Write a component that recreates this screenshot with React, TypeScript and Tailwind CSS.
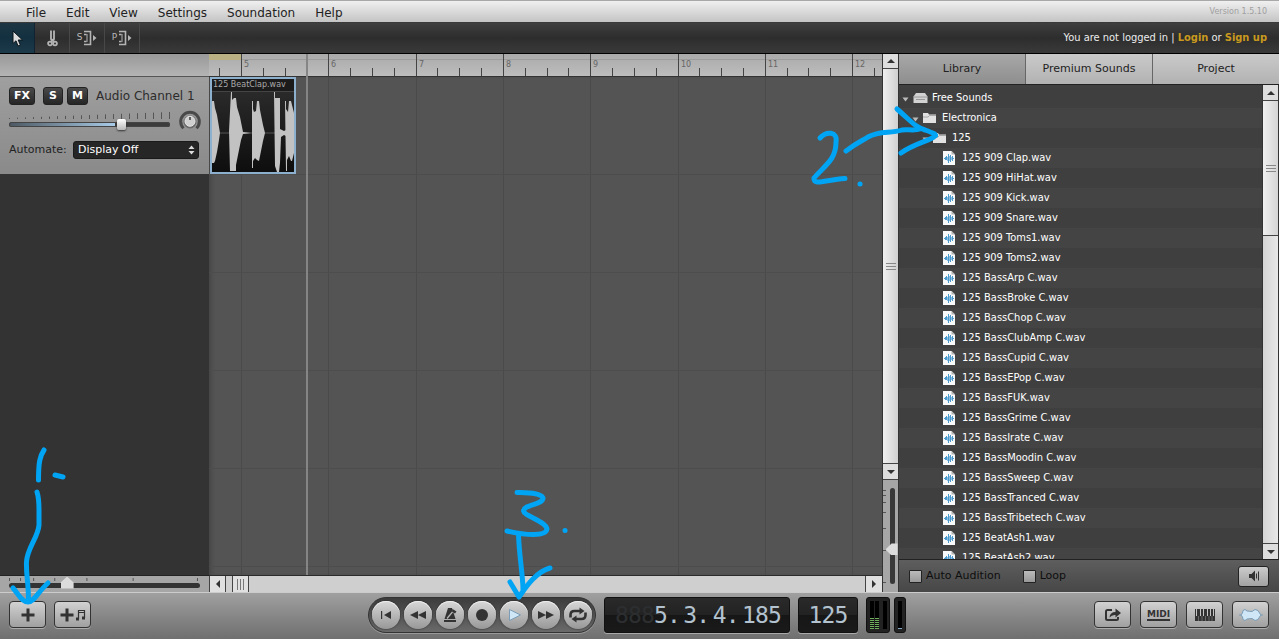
import React from "react";

const MENUS = ["File", "Edit", "View", "Settings", "Soundation", "Help"];

const FILES = [
  "125 909 Clap.wav",
  "125 909 HiHat.wav",
  "125 909 Kick.wav",
  "125 909 Snare.wav",
  "125 909 Toms1.wav",
  "125 909 Toms2.wav",
  "125 BassArp C.wav",
  "125 BassBroke C.wav",
  "125 BassChop C.wav",
  "125 BassClubAmp C.wav",
  "125 BassCupid C.wav",
  "125 BassEPop C.wav",
  "125 BassFUK.wav",
  "125 BassGrime C.wav",
  "125 BassIrate C.wav",
  "125 BassMoodin C.wav",
  "125 BassSweep C.wav",
  "125 BassTranced C.wav",
  "125 BassTribetech C.wav",
  "125 BeatAsh1.wav",
  "125 BeatAsh2.wav",
];

const BAR = 87.3;
const FIRST_BAR_X = 32;

function Triangle({ dir, className = "" }: { dir: "up" | "down" | "left" | "right"; className?: string }) {
  const d = {
    up: "M0 6 L4 2 L8 6Z",
    down: "M0 2 L8 2 L4 6Z",
    left: "M6 0 L2 4 L6 8Z",
    right: "M2 0 L6 4 L2 8Z",
  }[dir];
  return (
    <svg width="8" height="8" viewBox="0 0 8 8" className={className} aria-hidden="true">
      <path d={d} fill="currentColor" />
    </svg>
  );
}

function MenuBar() {
  return (
    <header className="flex h-[23px] shrink-0 items-center justify-between border-t border-b border-t-[#a8a8a8] border-b-[#3a3a3a] bg-gradient-to-b from-[#f0f0f0] to-[#c4c4c4] pl-4 pr-3">
      <nav className="flex pt-[2px]">
        {MENUS.map((m) => (
          <button key={m} className="px-2.5 text-[12px] leading-4 text-[#222]">
            {m}
          </button>
        ))}
      </nav>
      <span className="text-[8px] leading-4 text-[#a0a0a0]">Version 1.5.10</span>
    </header>
  );
}

function ToolButton({ label, active, children }: { label: string; active?: boolean; children: React.ReactNode }) {
  return (
    <button
      aria-label={label}
      className={
        "flex h-full w-[35px] items-center justify-center border-r text-[#b8b8b8] " +
        (active ? "border-[#123] bg-gradient-to-b from-[#1d3644] via-[#123040] to-[#1c3a4a]" : "border-[#484848]")
      }
    >
      {children}
    </button>
  );
}

function BracketIcon() {
  return (
    <svg width="13" height="16" viewBox="0 0 13 16" aria-hidden="true">
      <path d="M0 1.500h6.500v13H0M0 4.500h2.500M0 11.500h2.500" fill="none" stroke="#b4b4b4" strokeWidth="1.600" />
      <path d="M3 4v8" stroke="#b4b4b4" />
      <path d="M9 5v6l3.500-3z" fill="#b4b4b4" />
    </svg>
  );
}

function Toolbar() {
  return (
    <div className="flex h-[31px] shrink-0 items-center justify-between border-b border-black bg-gradient-to-b from-[#3e3e3e] via-[#2d2d2d] to-[#3a3a3a] pr-3">
      <div className="flex h-full">
        <ToolButton label="Select" active>
          <svg width="12" height="17" viewBox="0 0 12 17" aria-hidden="true">
            <path d="M2 1v12.500l3-2.700L7 16l2.400-1-2.200-5H11.500z" fill="#dcdcdc" stroke="#0b151b" />
          </svg>
        </ToolButton>
        <ToolButton label="Cut">
          <svg width="11" height="17" viewBox="0 0 11 17" fill="none" stroke="#b4b4b4" strokeWidth="1.800" aria-hidden="true">
            <path d="M4 0.500v8.500L7.500 12M7 0.500v8.500L3.500 12" />
            <circle cx="3" cy="13.500" r="1.900" />
            <circle cx="8" cy="13.500" r="1.900" />
          </svg>
        </ToolButton>
        <ToolButton label="Snap to grid">
          <span className="mr-0.5 text-[9px]">S</span>
          <BracketIcon />
        </ToolButton>
        <ToolButton label="Playhead snap">
          <span className="mr-0.5 text-[9px]">P</span>
          <BracketIcon />
        </ToolButton>
      </div>
      <p className="font-['DejaVu_Sans_Condensed','DejaVu_Sans',sans-serif] text-[11px] leading-4 text-[#ececec]">
        You are not logged in |{" "}
        <a href="#login" className="font-bold text-[#c99a1e]">
          Login
        </a>{" "}
        or{" "}
        <a href="#signup" className="font-bold text-[#c99a1e]">
          Sign up
        </a>
      </p>
    </div>
  );
}

function ChannelButton({ children }: { children: string }) {
  return (
    <button className="h-[18px] min-w-5 rounded-[3px] border border-[#222] bg-gradient-to-b from-[#4a4a4a] to-[#262626] px-1 text-[11px] font-bold leading-4 text-white">
      {children}
    </button>
  );
}

function Channel() {
  return (
    <section className="flex h-[98px] shrink-0 flex-col border-t border-t-[#555] bg-gradient-to-b from-[#9f9f9f] to-[#8a8a8a] pl-[9px] pr-2.5 pt-2.5">
      <div className="flex items-center">
        <div className="flex items-center">
          <ChannelButton>FX</ChannelButton>
          <div className="ml-2 flex gap-1">
            <ChannelButton>S</ChannelButton>
            <ChannelButton>M</ChannelButton>
          </div>
        </div>
        <span className="ml-2 text-[12px] leading-4 text-[#2c2c2c]">Audio Channel 1</span>
      </div>
      <div className="mt-[5px] flex items-start justify-between">
        <div className="flex w-[161px] flex-col pt-[2px]">
          <svg height="8" className="w-full shrink-0" viewBox="0 0 161 8" preserveAspectRatio="none" aria-hidden="true">
            {Array.from({ length: 21 }, (_, i) => (
              <rect key={i} x={i * 8} y={6 - i * 0.3} width="1" height={1 + i * 0.3} fill="#555" />
            ))}
          </svg>
          <input
            type="range"
            aria-label="Volume"
            defaultValue={71}
            className="mt-[-2px] h-3 w-full cursor-pointer appearance-none bg-transparent [&::-webkit-slider-runnable-track]:h-[5px] [&::-webkit-slider-runnable-track]:rounded-sm [&::-webkit-slider-runnable-track]:bg-[linear-gradient(to_right,#4c5862,#a9cce8_66%,#3c3c3c_66%)] [&::-webkit-slider-runnable-track]:shadow-[inset_0_0_0_1px_#444] [&::-webkit-slider-thumb]:mt-[-3px] [&::-webkit-slider-thumb]:h-[11px] [&::-webkit-slider-thumb]:w-[9px] [&::-webkit-slider-thumb]:appearance-none [&::-webkit-slider-thumb]:rounded-[2px] [&::-webkit-slider-thumb]:bg-gradient-to-b [&::-webkit-slider-thumb]:from-white [&::-webkit-slider-thumb]:to-[#b8b8b8] [&::-webkit-slider-thumb]:shadow-[0_1px_2px_#333]"
          />
        </div>
        <svg width="22" height="22" viewBox="0 0 22 22" className="-mr-0.5" role="img" aria-label="Pan">
          <path d="M4.500 18.200A9.300 9.300 0 1 1 17.500 18.200" fill="none" stroke="#4a4a4a" strokeWidth="3" />
          <circle cx="11" cy="12" r="6.500" fill="#6a6a6a" />
          <circle cx="11" cy="11.300" r="5" fill="#d0d0d0" stroke="#e8e8e8" />
          <path d="M11 7v3" stroke="#333" strokeWidth="1.400" />
        </svg>
      </div>
      <div className="mt-[9px] flex items-center justify-between">
        <label htmlFor="automate" className="text-[11px] leading-4 text-[#222]">
          Automate:
        </label>
        <div className="relative w-[126px]">
          <select
            id="automate"
            className="block h-[18px] w-full appearance-none rounded-[3px] border border-[#1a1a1a] bg-[#262626] pl-1 text-[11px] font-medium leading-4 text-white"
          >
            <option>Display Off</option>
          </select>
          <svg width="7" height="10" viewBox="0 0 7 10" className="pointer-events-none absolute right-1 top-1" aria-hidden="true">
            <path d="M0.500 4L3.500 0.500 6.500 4zM0.500 6L3.500 9.500 6.500 6z" fill="#ddd" />
          </svg>
        </div>
      </div>
    </section>
  );
}

function TrackPanel() {
  return (
    <aside className="flex w-[209px] shrink-0 flex-col bg-[#333]">
      <div className="h-[22px] shrink-0 bg-gradient-to-b from-[#999] to-[#b4b4b4]" />
      <Channel />
      <div className="flex-1" />
      <div className="flex h-[17px] shrink-0 flex-col border-t border-[#222] bg-[#a6a6a6] px-[9px]">
        <svg height="4" className="mt-[2px] w-full shrink-0" viewBox="0 0 190 4" preserveAspectRatio="none" aria-hidden="true">
          {[0, 11, 24, 45, 77, 123, 187].map((x) => (
            <rect key={x} x={x} y="0" width="1" height="3" fill="#555" />
          ))}
        </svg>
        <input
          type="range"
          aria-label="Horizontal zoom"
          defaultValue={29}
          className="mt-[-3px] h-3 w-full appearance-none bg-transparent [&::-webkit-slider-runnable-track]:h-[5px] [&::-webkit-slider-runnable-track]:rounded-sm [&::-webkit-slider-runnable-track]:bg-[#333] [&::-webkit-slider-thumb]:mt-[-6px] [&::-webkit-slider-thumb]:h-[12px] [&::-webkit-slider-thumb]:w-[13px] [&::-webkit-slider-thumb]:appearance-none [&::-webkit-slider-thumb]:bg-[#dcdcdc] [&::-webkit-slider-thumb]:[clip-path:polygon(50%_0,100%_50%,100%_100%,0_100%,0_50%)]"
        />
      </div>
    </aside>
  );
}

function Ruler() {
  return (
    <div className="relative h-[23px] shrink-0 overflow-hidden border-b border-[#333] bg-gradient-to-b from-[#aaa] to-[#bdbdbd]">
      <div className="h-[6px] border-b border-[#9c9c9c]">
        <div className="h-[6px] w-8 bg-[#b9b183]" />
      </div>
      <svg className="absolute inset-0 h-full w-full" aria-hidden="true">
        {Array.from({ length: 34 }, (_, i) => {
          const x = Math.round(FIRST_BAR_X + ((i - 1) * BAR) / 4);
          const major = (i - 1) % 4 === 0;
          return <rect key={i} x={x} y={major ? 0 : 14} width="1" height={major ? 22 : 8} fill="#444" />;
        })}
      </svg>
      {Array.from({ length: 8 }, (_, i) => (
        <span
          key={i}
          className="absolute top-[6px] text-[8px] leading-[9px] text-[#666]"
          style={{ left: Math.round(FIRST_BAR_X + 3 + i * BAR) }}
        >
          {i + 5}
        </span>
      ))}
    </div>
  );
}

function Clip() {
  return (
    <div className="absolute left-px top-0 flex h-[97px] w-[86px] flex-col overflow-hidden border-2 border-[#8eb0cf] bg-[#111]">
      <span className="h-[13px] shrink-0 whitespace-nowrap border-b border-[#444] bg-[#1b1b1b] pl-px text-[8px] leading-[11px] text-[#aaa]">
        125 BeatClap.wav
      </span>
      <svg className="min-h-0 w-full flex-1 bg-gradient-to-b from-[#2a2a2a] to-[#0e0e0e]" viewBox="0 0 82 80" preserveAspectRatio="none" aria-hidden="true">
        <path d="M0 41H82" stroke="#555" />
        <g fill="#c2c2c2">
          <path d="M0 9h2l1 7 2 7 2 12 1 6-1 7-2 12-2 9-1 2H0z" />
          <path d="M19 0h1v8l2-2h2l1 9 3 10 2 10 1 5 8 1-8 1-2 6-3 15-2 10v6h-6l-1-40z" />
          <path d="M40 9h1v8l1 3 2-1 1-10h2l1 9 3 15 2 8-2 8-2 10-2 10-2-1-2-2-2 3v7h-1z" />
          <path d="M62 0h1v6h5v31l4 2 2-1v6l-2-1-3 2-1 26-1 9h-2l-2-6z" />
          <path d="M73 9h1v8l2 3 1-11h2l3 12v40l-2 8h-1l-2-5-2 4v11h-1z" />
        </g>
      </svg>
    </div>
  );
}

function Timeline() {
  return (
    <main className="flex min-w-0 flex-1 flex-col">
      <div className="relative flex min-h-0 flex-1 flex-col">
        <Ruler />
        <div className="relative min-h-0 flex-1 bg-[#545454] shadow-[inset_4px_0_4px_-2px_#444]">
          <svg className="absolute inset-0 h-full w-full" aria-hidden="true">
            {Array.from({ length: 8 }, (_, i) => (
              <rect key={i} x={Math.round(FIRST_BAR_X + i * BAR)} y="0" width="1" height="100%" fill="#4a4a4a" />
            ))}
            {Array.from({ length: 5 }, (_, i) => (
              <rect key={i} x="0" y={97 + i * 98} width="100%" height="1" fill="#4d4d4d" />
            ))}
          </svg>
          <Clip />
        </div>
        <div className="absolute bottom-0 left-[97px] top-0 w-[2px] bg-[#858585]" />
      </div>
      <div className="flex h-[17px] shrink-0 border-t border-[#2b2b2b] bg-[#cfcfcf] text-[#333]">
        <button aria-label="Scroll left" className="flex w-[17px] items-center justify-center border-x border-[#444] bg-[#e0e0e0]">
          <Triangle dir="left" />
        </button>
        <div className="flex min-w-0 flex-1">
          <div className="ml-[6px] flex w-[17px] items-center justify-center gap-[2px] border-x border-[#444] bg-[#e0e0e0]">
            <i className="h-[11px] w-px bg-[#777]" />
            <i className="h-[11px] w-px bg-[#777]" />
            <i className="h-[11px] w-px bg-[#777]" />
          </div>
        </div>
        <button aria-label="Scroll right" className="flex w-[17px] items-center justify-center border-l border-[#444] bg-[#e0e0e0]">
          <Triangle dir="right" />
        </button>
      </div>
    </main>
  );
}

function Grip() {
  return (
    <div className="flex flex-col gap-[2px]">
      <i className="h-px w-[10px] bg-[#888]" />
      <i className="h-px w-[10px] bg-[#888]" />
      <i className="h-px w-[10px] bg-[#888]" />
    </div>
  );
}

function VerticalBar() {
  return (
    <div className="flex w-[17px] shrink-0 flex-col border-x border-[#333] text-[#333]">
      <button aria-label="Scroll up" className="flex h-[15px] items-center justify-center border-b border-[#444] bg-[#dedede]">
        <Triangle dir="up" />
      </button>
      <div className="flex min-h-0 flex-1 items-center justify-center bg-gradient-to-r from-[#f0f0f0] to-[#d0d0d0]">
        <Grip />
      </div>
      <button aria-label="Scroll down" className="flex h-[17px] shrink-0 items-center justify-center border-y border-[#444] bg-[#dedede]">
        <Triangle dir="down" />
      </button>
      <div className="flex h-[112px] shrink-0 justify-end bg-[#a6a6a6] py-2">
        <svg width="3" height="96" aria-hidden="true">
          {[2, 7, 14, 24, 40, 62, 94].map((y) => (
            <rect key={y} x="0" y={y} width="3" height="1" fill="#555" />
          ))}
        </svg>
        <input
          type="range"
          aria-label="Vertical zoom"
          defaultValue={34}
          className="h-full w-[12px] appearance-none bg-transparent [direction:rtl] [writing-mode:vertical-lr] [&::-webkit-slider-runnable-track]:w-[5px] [&::-webkit-slider-runnable-track]:rounded-sm [&::-webkit-slider-runnable-track]:bg-[#383838] [&::-webkit-slider-thumb]:ml-[-4px] [&::-webkit-slider-thumb]:h-[12px] [&::-webkit-slider-thumb]:w-[12px] [&::-webkit-slider-thumb]:appearance-none [&::-webkit-slider-thumb]:bg-[#dcdcdc] [&::-webkit-slider-thumb]:[clip-path:polygon(0_50%,50%_0,100%_0,100%_100%,50%_100%)]"
        />
      </div>
    </div>
  );
}

function FolderIcon() {
  return (
    <svg width="13" height="10" viewBox="0 0 13 10" aria-hidden="true">
      <path d="M0 0h5l1 1.500h7V10H0z" fill="#e2e2e2" />
      <path d="M0 4h5l1.500-1.500H13" stroke="#999" fill="none" strokeWidth=".8" />
    </svg>
  );
}

function DriveIcon() {
  return (
    <svg width="15" height="10" viewBox="0 0 15 10" aria-hidden="true">
      <path d="M3 0h9l2.500 3.500V10H.5V3.500z" fill="#d2d2d2" />
      <path d="M1 4h13M3 6.500h9" stroke="#8c8c8c" strokeWidth=".8" />
    </svg>
  );
}

function WaveFileIcon() {
  return (
    <svg width="12" height="14" viewBox="0 0 12 14" aria-hidden="true">
      <path d="M0 0h8.500L12 3.500V14H0z" fill="#f7f9fb" />
      <path d="M8.500 0v3.500H12z" fill="#b4b4b4" />
      <path d="M1 7.500h10" stroke="#4a9ace" />
      <path d="M2.500 6v3M3.500 5v4M5.500 3v9M7.500 4v7M9.500 5v5" stroke="#4a9ace" />
      <path d="M4.500 6v4M6.500 5v5M8.500 6v3" stroke="#8fc0e2" />
    </svg>
  );
}

function Row({ pad, open, icon, children }: { pad: string; open?: boolean; icon: React.ReactNode; children: string }) {
  return (
    <li className="bg-[#444] odd:bg-[#3f3f3f]">
      <button className={"flex h-5 w-full items-center whitespace-nowrap text-left " + pad}>
        {open && (
          <svg width="7" height="8" viewBox="0 0 7 8" className="mr-1 mt-0.5 shrink-0" aria-hidden="true">
            <path d="M.5 2.500h6l-3 4z" fill="#bbb" />
          </svg>
        )}
        <span className="flex w-[19px] shrink-0 items-center">{icon}</span>
        {children}
      </button>
    </li>
  );
}

function Library() {
  const tabs = ["Library", "Premium Sounds", "Project"];
  return (
    <aside className="flex w-[380px] shrink-0 flex-col bg-[#404040]">
      <div role="tablist" className="flex h-[31px] shrink-0 border-b border-[#222]">
        {tabs.map((t, i) => (
          <button
            key={t}
            role="tab"
            aria-selected={i === 0}
            className={
              "flex-1 text-[11px] text-[#222] " +
              (i === 0 ? "bg-gradient-to-b from-[#a8a8a8] to-[#8e8e8e]" : "border-l border-[#666] bg-gradient-to-b from-[#cacaca] to-[#b2b2b2]")
            }
          >
            {t}
          </button>
        ))}
      </div>
      <div className="flex min-h-0 flex-1">
        <ul className="min-w-0 flex-1 overflow-hidden pt-[3px] font-['DejaVu_Sans_Condensed','DejaVu_Sans',sans-serif] text-[11px] leading-4 text-white">
          <Row pad="pl-[3px]" open icon={<DriveIcon />}>
            Free Sounds
          </Row>
          <Row pad="pl-[13px]" open icon={<FolderIcon />}>
            Electronica
          </Row>
          <Row pad="pl-[23px]" open icon={<FolderIcon />}>
            125
          </Row>
          {FILES.map((f) => (
            <Row key={f} pad="pl-[44px]" icon={<WaveFileIcon />}>
              {f}
            </Row>
          ))}
        </ul>
        <div className="flex w-[17px] shrink-0 flex-col border-x border-[#333] text-[#333]">
          <button aria-label="Scroll list up" className="flex h-[16px] shrink-0 items-center justify-center border-b border-[#444] bg-[#dedede]">
            <Triangle dir="up" />
          </button>
          <div className="flex h-[135px] shrink-0 items-center justify-center border-b border-[#444] bg-gradient-to-r from-[#f0f0f0] to-[#d4d4d4]">
            <Grip />
          </div>
          <div className="min-h-0 flex-1 bg-gradient-to-r from-[#d4d4d4] to-[#e8e8e8]" />
          <button aria-label="Scroll list down" className="flex h-[16px] shrink-0 items-center justify-center border-t border-[#444] bg-[#dedede]">
            <Triangle dir="down" />
          </button>
        </div>
      </div>
      <div className="flex h-[33px] shrink-0 items-center border-t border-[#222] bg-gradient-to-b from-[#5e5e5e] to-[#474747] pl-2.5 pr-2.5 text-[11px] text-[#0e0e0e]">
        {["Auto Audition", "Loop"].map((l) => (
          <label key={l} className="mr-[22px] flex items-center gap-1">
            <input
              type="checkbox"
              className="h-[13px] w-[13px] appearance-none rounded-[1px] border border-[#222] bg-gradient-to-b from-[#bbb] to-[#999]"
            />
            {l}
          </label>
        ))}
        <button
          aria-label="Preview volume"
          className="ml-auto flex h-[21px] w-[31px] items-center justify-center rounded-[3px] border border-[#222] bg-gradient-to-b from-[#ccc] to-[#a2a2a2]"
        >
          <svg width="12" height="12" viewBox="0 0 12 12" aria-hidden="true">
            <path d="M1 4h2.500L7 .5v11L3.500 8H1z" fill="#333" />
            <path d="M8.500 3.500v5M10.500 1.500v9" stroke="#333" />
          </svg>
        </button>
      </div>
    </aside>
  );
}

function PanelButton({ label, children }: { label: string; children: React.ReactNode }) {
  return (
    <button
      aria-label={label}
      className="flex h-[27px] w-[37px] items-center justify-center rounded border border-[#333] bg-gradient-to-b from-[#d2d2d2] to-[#a0a0a0] text-[#333] shadow-[0_1px_0_#aaa]"
    >
      {children}
    </button>
  );
}

function RoundButton({ label, children }: { label: string; children: React.ReactNode }) {
  return (
    <button
      aria-label={label}
      className="flex h-7 w-7 items-center justify-center rounded-full bg-gradient-to-b from-[#d8d8d8] to-[#989898] shadow-[inset_0_1px_0_#eee,0_0_2px_#222]"
    >
      <svg width="20" height="20" viewBox="0 0 20 20" fill="#333" aria-hidden="true">
        {children}
      </svg>
    </button>
  );
}

function Digits({ ghost = "", value }: { ghost?: string; value: string }) {
  return (
    <span className="flex">
      {ghost.split("").map((g, i) => (
        <span key={i} className="w-[13px] text-[#2c2e30]">
          {g}
        </span>
      ))}
      {value.split("").map((v, i) => (
        <span key={i} className={v === "." ? "w-4" : "w-[13px]"}>
          {v}
        </span>
      ))}
    </span>
  );
}

const lcd =
  "flex h-9 items-center rounded-[3px] border border-[#111] bg-[linear-gradient(#2a2a2a,#222_50%,#161616_50%,#1a1a1a)] font-['DejaVu_Sans_Mono',monospace] text-[23px] leading-6 text-[#b3c2cf] shadow-[0_1px_0_#aaa]";

function BottomBar() {
  return (
    <footer className="flex h-[47px] shrink-0 items-start border-t border-[#ccc] bg-gradient-to-b from-[#a0a0a0] to-[#6f6f6f] pt-1">
      <div className="flex w-[368px] shrink-0 gap-2 pl-[9px] pt-[4px]">
        <PanelButton label="Add channel">
          <svg width="14" height="14" viewBox="0 0 14 14" aria-hidden="true">
            <path d="M7 .5v13M.5 7h13" stroke="currentColor" strokeWidth="3" />
          </svg>
        </PanelButton>
        <PanelButton label="Add instrument channel">
          <svg width="26" height="14" viewBox="0 0 26 14" aria-hidden="true">
            <path d="M7 .5v13M.5 7h13" stroke="currentColor" strokeWidth="3" />
            <path d="M18.500 11V2.500h6V10M18.500 4.500h6" fill="none" stroke="currentColor" strokeWidth="1.200" />
            <path d="M16 9.500h3v3h-3zM22 8.500h3v3h-3z" fill="currentColor" />
          </svg>
        </PanelButton>
      </div>
      <div className="flex h-9 items-center gap-1 rounded-full border border-[#333] bg-gradient-to-b from-[#3c3c3c] to-[#6a6a6a] px-[3px] shadow-[0_1px_0_#999]">
        <RoundButton label="Go to start">
          <path d="M5 6h1.200v8H5zM15 6v8l-7-4z" />
        </RoundButton>
        <RoundButton label="Rewind">
          <path d="M10 6v8l-8-4zM18 6v8l-8-4z" />
        </RoundButton>
        <RoundButton label="Metronome">
          <path d="M4 15h12v2H4zM8 3h4v11H4.500z" />
          <path d="M12 3l3.500 11H9z" />
          <path d="M7 13.500L14.500 4.500" stroke="#b8b8b8" strokeWidth="1.200" />
          <path d="M12.500 4l4 2.500-1.500 2-3-2z" />
        </RoundButton>
        <RoundButton label="Record">
          <circle cx="10" cy="10" r="6" />
        </RoundButton>
        <RoundButton label="Play">
          <path d="M5.500 4.500v11L16.500 10z" fill="#cfe6f7" stroke="#7c9db5" />
        </RoundButton>
        <RoundButton label="Fast forward">
          <path d="M2 6v8l8-4zM10 6v8l8-4z" />
        </RoundButton>
        <RoundButton label="Loop playback">
          <path d="M2.500 12.500V10q0-4 4-4h6M17.500 7.500V10q0 4-4 4H7" fill="none" stroke="#333" strokeWidth="2.600" />
          <path d="M11.500 2.500v7l5-3.500zM8.500 10.500v7L3.500 14z" />
        </RoundButton>
      </div>
      <div className={lcd + " ml-2 w-[186px] justify-between pl-2.5 pr-2"}>
        <Digits ghost="888" value="5." />
        <Digits value="3." />
        <Digits value="4." />
        <Digits value="185" />
      </div>
      <div className={lcd + " ml-2 w-[60px] justify-center"}>
        <Digits value="125" />
      </div>
      <div className="ml-2 flex h-9 w-6 justify-center gap-px rounded-[3px] border border-[#111] bg-[#222] py-[3px]" role="img" aria-label="Output level">
        <i className="flex w-[4px] items-end bg-black">
          <i className="h-[11px] w-full bg-[repeating-linear-gradient(#6fae5a_0_1px,#111_1px_2px)]" />
        </i>
        <i className="flex w-[4px] items-end bg-black">
          <i className="h-[11px] w-full bg-[repeating-linear-gradient(#6fae5a_0_1px,#111_1px_2px)]" />
        </i>
        <i className="ml-[3px] w-[4px] bg-black" />
      </div>
      <div className="ml-1 flex h-9 w-3 items-stretch justify-center rounded-[3px] border border-[#111] bg-[#222] py-[3px]" role="img" aria-label="Processor load">
        <i className="w-[4px] border-b border-[#88a8c8] bg-black" />
      </div>
      <div className="ml-auto flex gap-[9px] pr-[10px] pt-[4px]">
        <PanelButton label="Share">
          <svg width="18" height="14" viewBox="0 0 18 14" aria-hidden="true">
            <path d="M8 2H3.500Q2 2 2 3.500v7Q2 12 3.500 12h9q1.500 0 1.500-1.500V9" fill="none" stroke="currentColor" strokeWidth="2" />
            <path d="M5.500 9.500Q6 4 11.500 4V.5L17 5l-5.500 4.500V7Q8 6.500 5.500 9.500z" fill="currentColor" />
          </svg>
        </PanelButton>
        <PanelButton label="MIDI">
          <span className="border-b-2 border-[#333] text-[9px] font-bold leading-[10px]">MIDI</span>
        </PanelButton>
        <PanelButton label="Keyboard">
          <svg width="20" height="12" viewBox="0 0 20 12" aria-hidden="true">
            <path d="M0 0h20v12H0z" fill="currentColor" />
            <path d="M1.500 0v7M5.500 0v7M8.500 0v7M12.500 0v7M15.500 0v7M18.500 0v7" stroke="#c4c4c4" />
            <path d="M3.500 7v5M7 7v5M10.500 7v5M14 7v5M17 7v5" stroke="#8c8c8c" strokeWidth=".6" />
          </svg>
        </PanelButton>
        <PanelButton label="Audio editor">
          <svg width="24" height="14" viewBox="0 0 24 14" aria-hidden="true">
            <path d="M0 7h24" stroke="#7c9db5" />
            <path d="M2 7L3.500 5 4 2.500 6 1.500 8 3 13 3.500 16 1.500 19 2.500 20.500 5 22 7 20.500 9 19 11.500 16 12.500 13 10.500 8 11 6 12.500 4 11.500 3.500 9z" fill="#cfe6f7" stroke="#7c9db5" />
          </svg>
        </PanelButton>
      </div>
    </footer>
  );
}

function Annotations() {
  return (
    <svg
      className="pointer-events-none absolute inset-0 h-full w-full"
      fill="none"
      stroke="#00a4f4"
      strokeWidth="5"
      strokeLinecap="round"
      strokeLinejoin="round"
      role="img"
      aria-label="Steps one to three"
    >
      <path d="M44 450C40 456 38.500 462 38.500 480M55 475l8 2" />
      <path d="M37 492C39 498 39 502 39 510V525C38 538 27 548 26.500 562C26 575 28.500 583 28.500 600" />
      <path d="M13 588C20 596 22 602 28 602C34 602 38 592 48 583" />
      <path d="M820 138C826 131 838 131 836 142C836 160 825 165 814 178C813 186 825 180 845 178.500M860 184h.1" />
      <path d="M846 151C858 142 862 141 868 137C880 130 890 134 902 130C906 129 915 131 920 129" />
      <path d="M897 109C912 122 915 127 925 130C934 133 937 135 935 136C930 141 915 143 901 153" />
      <path d="M517 492.500C530 493 541 493 543 498C543 505 524 504 523.500 511C524 516 546 521 547 529C546 537 525 535 507 531M565 530.500h.1" />
      <path d="M518.500 534C519 555 523 575 523 590M510 582L519 597C524 590 535 572 550 568" />
    </svg>
  );
}

export default function App() {
  return (
    <div className="bg-white pr-[2px] font-['DejaVu_Sans',sans-serif]">
      <div className="relative flex h-screen flex-col overflow-hidden">
        <MenuBar />
        <Toolbar />
        <div className="flex min-h-0 flex-1">
          <TrackPanel />
          <Timeline />
          <VerticalBar />
          <Library />
        </div>
        <BottomBar />
        <Annotations />
      </div>
    </div>
  );
}
